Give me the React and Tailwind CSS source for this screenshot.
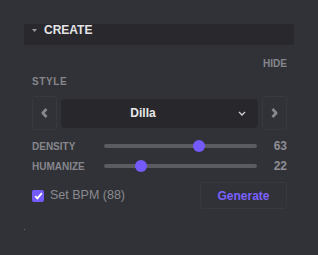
import React from 'react';

const sliders = [
  { label: 'DENSITY', value: 63 },
  { label: 'HUMANIZE', value: 22 },
];

const Slider = ({ value }) => (
  <div className="relative flex-1 h-3 flex items-center">
    <div className="w-full h-1 rounded-full bg-[#5b5b61]"></div>
    {/* thumb travels inside the track */}
    <div
      className="absolute top-0 w-3 h-3 rounded-full bg-[#7459fb]"
      style={{ left: `calc(${value / 100} * (100% - 12px))` }}
    ></div>
  </div>
);

const ArrowButton = ({ dir }) => (
  <button className="w-[25px] h-[34px] flex items-center justify-center rounded-[4px] border border-dotted border-[#404147]">
    <svg width="7" height="10" viewBox="0 0 7 10" fill="none">
      <polyline
        points={dir === 'left' ? '5.5,1 1.8,5 5.5,9' : '1.5,1 5.2,5 1.5,9'}
        stroke="#88888e"
        strokeWidth="2.6"
        strokeLinejoin="round"
      />
    </svg>
  </button>
);

export default function App() {
  return (
    <div className="w-[318px] h-[255px] bg-[#313237] pt-6 font-['Liberation_Sans',Arial,sans-serif]">
      <div className="ml-6 w-[270px]">
        {/* Header */}
        <div className="h-[21px] bg-[#28282d] flex items-start pl-2">
          <svg width="5" height="3" viewBox="0 0 5 3" className="mt-[5px]">
            <polygon points="0,0 5,0 2.5,3" fill="#9a9aa0" />
          </svg>
          <span className="ml-[7px] text-[12px] font-bold leading-[12px] text-[#e4e4e6]">CREATE</span>
        </div>

        <div className="pl-2 pr-[7px]">
          <div className="mt-[13px] flex justify-end text-[10px] leading-[11px] font-bold text-[#86868c]">HIDE</div>
          <div className="mt-[7px] text-[10px] leading-[11px] font-bold tracking-[0.06em] text-[#86868c]">STYLE</div>

          {/* Style selector */}
          <div className="mt-[9px] flex items-center gap-1">
            <ArrowButton dir="left" />
            <div className="flex-1 h-[29px] rounded-[4px] bg-[#28282c] flex items-center">
              <span className="flex-1 text-center text-[12px] font-bold text-[#e8e8ea]">Dilla</span>
              <div className="w-[33px] flex justify-center">
                <svg width="8" height="5" viewBox="0 0 8 5" fill="none">
                  <polyline points="1,1 4,4 7,1" stroke="#d0d0d4" strokeWidth="1.3" />
                </svg>
              </div>
            </div>
            <ArrowButton dir="right" />
          </div>

          {/* Sliders */}
          <div className="mt-[6px]">
            {sliders.map((s) => (
              <div key={s.label} className="h-5 flex items-center">
                <span className="w-[72px] text-[10px] font-bold text-[#86868c]">{s.label}</span>
                <Slider value={s.value} />
                <span className="w-[30px] text-right text-[12px] font-bold text-[#8e8e94]">{s.value}</span>
              </div>
            ))}
          </div>

          {/* BPM + Generate */}
          <div className="mt-[6px] flex items-center justify-between">
            <label className="flex items-center">
              <span className="w-3 h-3 rounded-[2px] bg-[#7459fb] flex items-center justify-center">
                <svg width="9" height="8" viewBox="0 0 9 8" fill="none">
                  <polyline points="1.2,4.2 3.4,6.4 7.8,1.2" stroke="#ffffff" strokeWidth="1.8" />
                </svg>
              </span>
              <span className="ml-[6px] text-[12.5px] text-[#8a8a90]">Set BPM (88)</span>
            </label>
            <button className="w-[87px] h-[27px] rounded-[4px] border border-dotted border-[#404147] text-[12px] font-bold text-[#7b61ff]">
              Generate
            </button>
          </div>
        </div>

        <div className="mt-5 w-px h-px bg-[#6a6a70]"></div>
      </div>
    </div>
  );
}
